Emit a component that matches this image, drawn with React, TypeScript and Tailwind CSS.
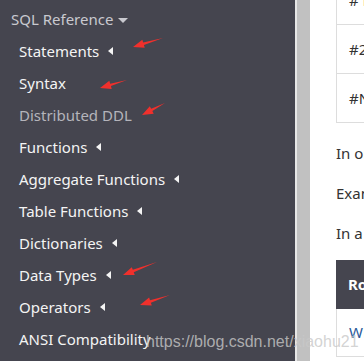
import React from "react";

const items = [
  { label: "Statements", caret: true, tone: "text-[#f4f4f4]" },
  { label: "Syntax", caret: false, tone: "text-[#f4f4f4]" },
  { label: "Distributed DDL", caret: false, tone: "text-[#b4b4bb]" },
  { label: "Functions", caret: true, tone: "text-[#f4f4f4]" },
  { label: "Aggregate Functions", caret: true, tone: "text-[#f4f4f4]" },
  { label: "Table Functions", caret: true, tone: "text-[#f4f4f4]" },
  { label: "Dictionaries", caret: true, tone: "text-[#f4f4f4]" },
  { label: "Data Types", caret: true, tone: "text-[#f4f4f4]" },
  { label: "Operators", caret: true, tone: "text-[#f4f4f4]" },
  { label: "ANSI Compatibility", caret: false, tone: "text-[#f4f4f4]" },
];

// red annotation arrows: tail (x1,y1) -> tip (x2,y2)
const arrows = [
  { x1: 163, y1: 38, x2: 133, y2: 47 },
  { x1: 127, y1: 80, x2: 100, y2: 88 },
  { x1: 165, y1: 103, x2: 142, y2: 115 },
  { x1: 157, y1: 262, x2: 123, y2: 275 },
  { x1: 170, y1: 295, x2: 140, y2: 305 },
];

function CaretLeft() {
  return (
    <svg width="5" height="8" viewBox="0 0 5 8" className="ml-[9px] shrink-0">
      <path d="M5 0 L0 4 L5 8 Z" fill="#f4f4f4" />
    </svg>
  );
}

function Arrow({ x1, y1, x2, y2 }: { x1: number; y1: number; x2: number; y2: number }) {
  const dx = x2 - x1;
  const dy = y2 - y1;
  const len = Math.hypot(dx, dy);
  const ux = dx / len;
  const uy = dy / len;
  const px = -uy;
  const py = ux;
  const head = 11;
  const bx = x2 - ux * head;
  const by = y2 - uy * head;
  const pts = [
    [x1, y1],
    [bx + px * 1.3, by + py * 1.3],
    [bx + px * 4.2, by + py * 4.2],
    [x2, y2],
    [bx - px * 4.2, by - py * 4.2],
    [bx - px * 1.3, by - py * 1.3],
  ]
    .map((p) => p.join(","))
    .join(" ");
  return <polygon points={pts} fill="#f0302c" />;
}

export default function App() {
  return (
    <div className="relative w-[364px] h-[361px] overflow-hidden flex bg-white" style={{ fontFamily: "'Noto Sans', sans-serif" }}>
      {/* Sidebar */}
      <div className="w-[295px] shrink-0 bg-[#45454f] pt-[3px]">
        <div className="h-[32px] flex items-center pl-[11px] text-[15px] text-[#c9c9cf]">
          SQL Reference
          <svg width="10" height="5" viewBox="0 0 10 5" className="ml-[5px] mt-[3px]">
            <path d="M0 0 L10 0 L5 5 Z" fill="#c9c9cf" />
          </svg>
        </div>
        {items.map((it) => (
          <div key={it.label} className={`h-[32px] flex items-center pl-[19px] text-[15px] ${it.tone}`}>
            {it.label}
            {it.caret && <CaretLeft />}
          </div>
        ))}
      </div>

      <div className="w-[2px] shrink-0 bg-[#e6e6e6]" />
      <div className="w-[13px] shrink-0 bg-[#c1c1c1]" />

      {/* Content */}
      <div className="flex-1 overflow-hidden pl-[26px] text-[15px] text-[#333]">
        <div className="w-[200px] -mt-[24px]">
          <div className="h-[49px] border-l border-b border-[#dddddd] flex items-center pl-[12px]">
            # <span className="text-[#c7813a] ml-1">l</span>
          </div>
          <div className="h-[49px] border-l border-b border-[#dddddd] flex items-center pl-[12px]">#2</div>
          <div className="h-[49px] border-l border-b border-[#dddddd] flex items-center pl-[12px]">#N</div>
        </div>
        <div className="h-[40px] mt-[10px] flex items-center whitespace-nowrap">In order</div>
        <div className="h-[40px] flex items-center whitespace-nowrap">Example</div>
        <div className="h-[40px] flex items-center whitespace-nowrap">In a</div>
        <div className="w-[200px] mt-[7px]">
          <div className="h-[49px] bg-[#45454f] flex items-center pl-[12px] font-bold text-white">Role</div>
          <div className="h-[48px] border-l border-b border-[#dddddd] flex items-center pl-[12px] text-[#2a5a9a]">WHERE</div>
        </div>
      </div>

      {/* annotations */}
      <svg className="absolute inset-0 pointer-events-none" width="364" height="361">
        {arrows.map((a, i) => (
          <Arrow key={i} {...a} />
        ))}
      </svg>

      {/* watermark */}
      <div
        className="absolute left-[146px] top-[330px] text-[16px] text-[#c8c8c8]/80 whitespace-nowrap pointer-events-none"
        style={{ fontFamily: "'Liberation Sans', Arial, sans-serif" }}
      >
        https://blog.csdn.net/xiaohu21
      </div>
    </div>
  );
}
